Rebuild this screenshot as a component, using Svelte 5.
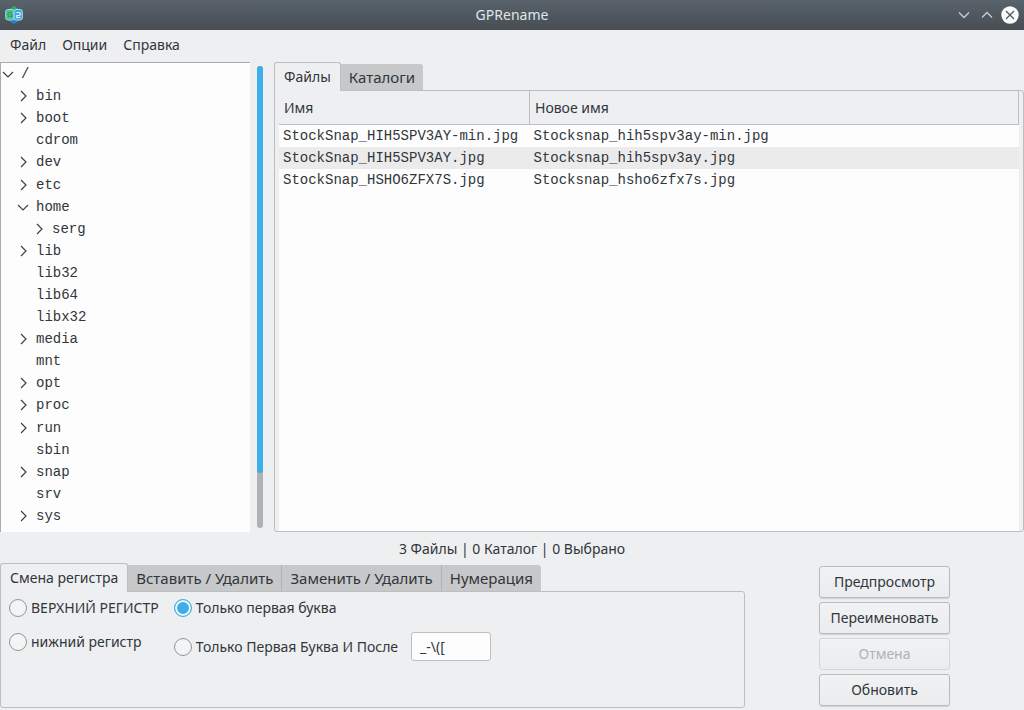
<script lang="ts">
  type Node = { name: string; depth: number; state: "open" | "closed" | "leaf" };

  const menus = ["Файл", "Опции", "Справка"];

  const nodes: Node[] = [
    { name: "/", depth: 0, state: "open" },
    { name: "bin", depth: 1, state: "closed" },
    { name: "boot", depth: 1, state: "closed" },
    { name: "cdrom", depth: 1, state: "leaf" },
    { name: "dev", depth: 1, state: "closed" },
    { name: "etc", depth: 1, state: "closed" },
    { name: "home", depth: 1, state: "open" },
    { name: "serg", depth: 2, state: "closed" },
    { name: "lib", depth: 1, state: "closed" },
    { name: "lib32", depth: 1, state: "leaf" },
    { name: "lib64", depth: 1, state: "leaf" },
    { name: "libx32", depth: 1, state: "leaf" },
    { name: "media", depth: 1, state: "closed" },
    { name: "mnt", depth: 1, state: "leaf" },
    { name: "opt", depth: 1, state: "closed" },
    { name: "proc", depth: 1, state: "closed" },
    { name: "run", depth: 1, state: "closed" },
    { name: "sbin", depth: 1, state: "leaf" },
    { name: "snap", depth: 1, state: "closed" },
    { name: "srv", depth: 1, state: "leaf" },
    { name: "sys", depth: 1, state: "closed" },
  ];

  const files = [
    ["StockSnap_HIH5SPV3AY-min.jpg", "Stocksnap_hih5spv3ay-min.jpg"],
    ["StockSnap_HIH5SPV3AY.jpg", "Stocksnap_hih5spv3ay.jpg"],
    ["StockSnap_HSHO6ZFX7S.jpg", "Stocksnap_hsho6zfx7s.jpg"],
  ];

  const listTabs = ["Файлы", "Каталоги"];
  const actionTabs = ["Смена регистра", "Вставить / Удалить", "Заменить / Удалить", "Нумерация"];

  let listTab = $state(0);
  let actionTab = $state(0);
  let mode = $state("first");
  let delimiters = $state("_-\\([");
</script>

<div class="window">
  <header class="titlebar">
    <svg class="logo" viewBox="0 0 18 18" aria-hidden="true">
      <path d="M9 0l6 4v10l-6 4-6-4V4z" fill="#2f7fc8" />
      <path d="M9 0l6 4H3z" fill="#43a35c" />
      <rect x="0.7" y="3.5" width="8.3" height="10.5" rx="2" fill="#4fbb9a" stroke="#8fdcd8" />
      <rect x="9" y="3.5" width="8.3" height="10.5" rx="2" fill="#45a9e0" stroke="#a5dcf5" />
      <path d="M7 6.5H4.2Q3 6.5 3 8.5t1.2 2H7v-2H5" fill="none" stroke="#3a9a58" stroke-width="1.2" />
      <path d="M11.5 6.5h2.3q1.5 0 1.5 1.5t-1.5 1.5h-2v2h3.5" fill="none" stroke="#e2f6ff" stroke-width="1.2" />
    </svg>
    <h1>GPRename</h1>
    <div class="controls">
      <button aria-label="Свернуть">
        <svg viewBox="0 0 18 18"><path d="M4 6.5l5 5 5-5" /></svg>
      </button>
      <button aria-label="Развернуть">
        <svg viewBox="0 0 18 18"><path d="M4 11.5l5-5 5 5" /></svg>
      </button>
      <button class="close" aria-label="Закрыть">
        <svg viewBox="0 0 18 18"><circle cx="9" cy="9" r="8.7" /><path d="M5 5l8 8M13 5l-8 8" /></svg>
      </button>
    </div>
  </header>

  <nav class="menubar">
    {#each menus as menu}
      <button>{menu}</button>
    {/each}
  </nav>

  <main>
    <ul class="tree">
      {#each nodes as node}
        <li class="depth{node.depth}">
          <svg class="arrow" viewBox="0 0 14 14" aria-hidden="true">
            {#if node.state === "open"}
              <path d="M2 5l5 5 5-5" />
            {:else if node.state === "closed"}
              <path d="M5 2l5 5-5 5" />
            {/if}
          </svg>
          <span>{node.name}</span>
        </li>
      {/each}
    </ul>

    <div class="scrollbar"><div class="thumb"></div></div>

    <section class="notebook">
      <div class="tabs" role="tablist">
        {#each listTabs as tab, i}
          <button role="tab" aria-selected={listTab === i} class:active={listTab === i} onclick={() => (listTab = i)}>{tab}</button>
        {/each}
      </div>
      <div class="page files">
        <div class="view">
          <table>
            <thead>
              <tr><th>Имя</th><th>Новое имя</th></tr>
            </thead>
            <tbody>
              {#each files as [name, renamed]}
                <tr><td>{name}</td><td>{renamed}</td></tr>
              {/each}
            </tbody>
          </table>
        </div>
      </div>
    </section>
  </main>

  <p class="status">3 Файлы | 0 Каталог | 0 Выбрано</p>

  <footer>
    <section class="notebook">
      <div class="tabs" role="tablist">
        {#each actionTabs as tab, i}
          <button role="tab" aria-selected={actionTab === i} class:active={actionTab === i} onclick={() => (actionTab = i)}>{tab}</button>
        {/each}
      </div>
      <div class="page options">
        <div class="column">
          <label><input type="radio" value="upper" bind:group={mode} />ВЕРХНИЙ РЕГИСТР</label>
          <label><input type="radio" value="lower" bind:group={mode} />нижний регистр</label>
        </div>
        <div class="column">
          <label><input type="radio" value="first" bind:group={mode} />Только первая буква</label>
          <div class="after">
            <label><input type="radio" value="after" bind:group={mode} />Только Первая Буква И После</label>
            <input type="text" aria-label="Разделители" bind:value={delimiters} />
          </div>
        </div>
      </div>
    </section>

    <div class="actions">
      <button>Предпросмотр</button>
      <button>Переименовать</button>
      <button disabled>Отмена</button>
      <button>Обновить</button>
    </div>
  </footer>
</div>

<style>
  :global(body) {
    margin: 0;
    background: #eeeff1;
  }

  .window {
    --line: #bcbebf;
    --mono: "Liberation Mono", monospace;
    display: flex;
    flex-direction: column;
    min-height: 100vh;
    box-sizing: border-box;
    padding-bottom: 2px;
    background: #eeeff1;
    color: #31363b;
    font: 14px/20px "Noto Sans", sans-serif;
  }

  button {
    font: inherit;
    color: inherit;
    padding: 0;
    border: 0;
    background: none;
  }

  .titlebar {
    display: grid;
    grid-template-columns: 1fr auto 1fr;
    align-items: center;
    height: 30px;
    padding: 0 5px;
    background: linear-gradient(#59636b, #474d53);
    color: #dfe5e8;
  }

  .logo {
    width: 18px;
    height: 18px;
  }

  h1 {
    margin: 0;
    font-size: 14px;
    font-weight: 400;
  }

  .controls {
    display: flex;
    justify-content: flex-end;
    gap: 5px;
  }

  .controls svg {
    display: block;
    width: 18px;
    height: 18px;
    fill: none;
    stroke: #c9ced2;
    stroke-width: 1.3;
  }

  .controls .close circle {
    fill: #fcfcfc;
    stroke: none;
  }

  .controls .close path {
    stroke: #50585f;
  }

  .menubar {
    display: flex;
    gap: 16px;
    height: 30px;
    padding: 0 10px 2px;
  }

  main {
    display: flex;
    flex: 1;
  }

  .tree {
    display: flex;
    flex-direction: column;
    width: 250px;
    box-sizing: border-box;
    margin: 0;
    padding: 0 0 5px;
    border-top: 1px solid #a9abad;
    border-left: 1px solid #a9abad;
    background: #fdfdfd;
    list-style: none;
    font-family: var(--mono);
  }

  .tree li {
    display: flex;
    flex: 1;
    align-items: center;
    gap: 6px;
  }

  .depth1 {
    padding-left: 15px;
  }

  .depth2 {
    padding-left: 31px;
  }

  .arrow {
    width: 14px;
    height: 14px;
    fill: none;
    stroke: #3b4045;
    stroke-width: 1.2;
  }

  .scrollbar {
    width: 6px;
    margin: 4px 11px 4px 7px;
    border-radius: 3px;
    background: #afb1b2;
  }

  .thumb {
    height: 88%;
    border-radius: 3px;
    background: #3daee9;
  }

  .notebook {
    display: flex;
    flex: 1;
    flex-direction: column;
  }

  .tabs {
    display: flex;
    align-items: flex-end;
    height: 28px;
  }

  .tabs button {
    height: 26px;
    padding: 0 8px;
    border-right: 1px solid #b0b1b3;
    background: #c7c8c9;
    font-size: 15px;
  }

  .tabs button:last-child {
    border-right: 0;
    border-radius: 0 3px 0 0;
  }

  .tabs .active {
    z-index: 1;
    height: 29px;
    margin-bottom: -1px;
    padding: 0 9px;
    border: 1px solid var(--line);
    border-bottom: 0;
    border-radius: 3px 3px 0 0;
    background: #eeeff1;
    font-size: 14px;
  }

  .page {
    flex: 1;
    border: 1px solid var(--line);
    border-radius: 0 3px 3px 3px;
  }

  .files {
    display: flex;
    padding: 0 4px;
  }

  .view {
    flex: 1;
    background: #fdfdfd;
  }

  table {
    width: 100%;
    border-collapse: collapse;
    table-layout: fixed;
  }

  th {
    height: 33px;
    padding: 0 5px;
    border-right: 1px solid var(--line);
    border-bottom: 1px solid var(--line);
    background: #eeeff1;
    font-weight: 400;
    text-align: left;
  }

  th:first-child {
    width: 240px;
  }

  td {
    height: 22px;
    padding: 0 4px;
    font-family: var(--mono);
    white-space: nowrap;
  }

  tbody tr:nth-child(even) {
    background: #ebebeb;
  }

  .status {
    margin: 0;
    padding: 7px 0 4px;
    text-align: center;
  }

  footer {
    display: flex;
  }

  .options {
    display: flex;
    gap: 15px;
    padding: 6px 8px 46px;
  }

  .column {
    display: flex;
    flex-direction: column;
    gap: 14px;
  }

  label {
    display: flex;
    align-items: center;
    gap: 4px;
  }

  .after {
    display: flex;
    align-items: center;
    gap: 13px;
  }

  input[type="radio"] {
    appearance: none;
    width: 18px;
    height: 18px;
    margin: 0;
    border: 1px solid #929597;
    border-radius: 50%;
    background: #f3f4f5;
  }

  input[type="radio"]:checked {
    border-color: #3daee9;
    background: #3daee9;
    box-shadow: inset 0 0 0 2px #f6f8f9;
  }

  input[type="text"] {
    width: 80px;
    height: 29px;
    box-sizing: border-box;
    padding: 0 8px;
    border: 1px solid var(--line);
    border-radius: 3px;
    background: #fdfdfd;
    color: inherit;
    font: inherit;
  }

  .actions {
    display: flex;
    flex-direction: column;
    align-items: center;
    gap: 4px;
    width: 279px;
    padding-top: 3px;
  }

  .actions button {
    width: 131px;
    height: 32px;
    border: 1px solid #b9bbbd;
    border-radius: 3px;
    background: linear-gradient(#f1f2f3, #ebecee);
    box-shadow: 0 1px 1px #d0d1d3;
  }

  .actions button:disabled {
    border-color: #d3d5d6;
    box-shadow: none;
    color: #b0b2b4;
  }
</style>
